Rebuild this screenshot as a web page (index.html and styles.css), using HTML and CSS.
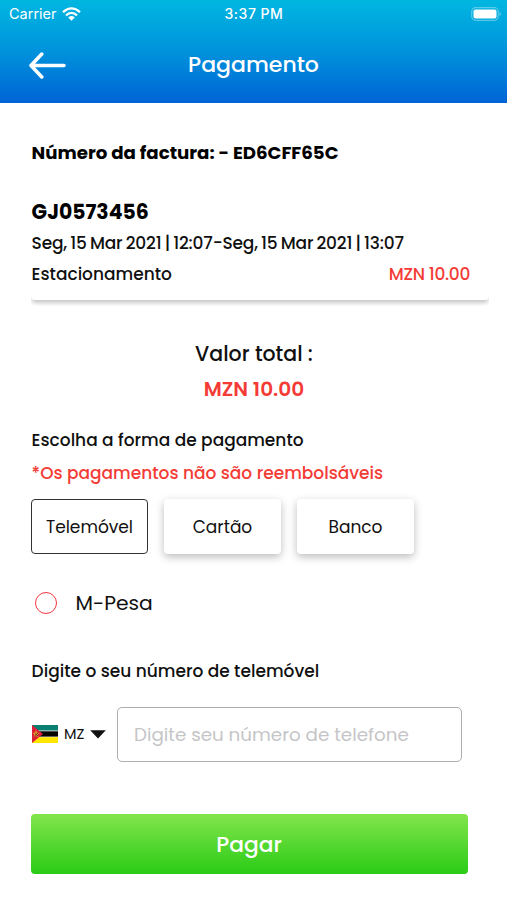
FILE: index.html
```html
<!DOCTYPE html>
<html lang="pt">
<head>
<meta charset="utf-8">
<title>Pagamento</title>
<link rel="stylesheet" href="styles.css">
</head>
<body>
<header class="header">
  <div class="status">
    <div class="carrier"><span>Carrier</span>
      <svg width="19" height="14" viewBox="0 0 19 14" fill="none" stroke="#fff" stroke-width="2.3"><path d="M1 5.2Q9.500-2.400 18 5.200"/><path d="M4 8.300Q9.500 3.500 15 8.300"/><path d="M6.200 10.400Q9.500 7.800 12.800 10.400L9.500 13.700Z" fill="#fff" stroke="none"/></svg>
    </div>
    <span class="clock">3:37 PM</span>
    <svg class="battery" width="31" height="14" viewBox="0 0 31 14"><rect x=".7" y=".7" width="26.600" height="12.600" rx="4" fill="none" stroke="#fff" stroke-opacity=".35" stroke-width="1.200"/><rect x="2.500" y="2.500" width="23" height="9" rx="2" fill="#fff"/><path d="M28.700 5Q31 7 28.700 9Z" fill="#fff" fill-opacity=".5"/></svg>
  </div>
  <div class="titlebar">
    <svg width="40" height="28" viewBox="0 0 40 28" fill="none" stroke="#fff" stroke-width="3.500" stroke-linecap="round" stroke-linejoin="round"><path d="M14.800 3L4 14.500L14.800 26M4.500 14.500H37"/></svg>
    <h1 class="title">Pagamento</h1>
  </div>
</header>
<main class="content">
  <p class="line invoice">Número da factura: - ED6CFF65C</p>
  <section class="ticket">
    <p class="line plate">GJ0573456</p>
    <p class="line period">Seg, 15 Mar 2021 | 12:07-Seg, 15 Mar 2021 | 13:07</p>
    <p class="line service"><span>Estacionamento</span><span class="red price">MZN 10.00</span></p>
  </section>
  <section class="total">
    <p class="line">Valor total :</p>
    <p class="line red amount">MZN 10.00</p>
  </section>
  <p class="line choose">Escolha a forma de pagamento</p>
  <p class="line red note">*Os pagamentos não são reembolsáveis</p>
  <div class="tabs">
    <button class="tab active">Telemóvel</button>
    <button class="tab">Cartão</button>
    <button class="tab">Banco</button>
  </div>
  <div class="option"><span class="radio"></span><span>M-Pesa</span></div>
  <p class="line phone-label">Digite o seu número de telemóvel</p>
  <div class="phone">
    <div class="country">
      <svg width="26" height="18" viewBox="0 0 26 18"><path fill="#087f70" d="M0 0h26v6H0z"/><path fill="#f4f4ef" d="M0 5.500h26v7H0z"/><path fill="#050505" d="M0 6.300h26v5.300H0z"/><path fill="#ffe600" d="M0 12.200h26V18H0z"/><path fill="#dc2039" d="M0 0l11 9L0 18z"/><path fill="#e8a32a" d="M4 5l1 2.700 2.700.1-2.100 1.700.8 2.700L4 10.700l-2.400 1.500.8-2.700L.5 7.800 3 7.700z"/><path d="M2.300 11.500l4-4M3 8.500l3 2.500" stroke="#5c2c22" stroke-width=".9"/></svg>
      <span class="code">MZ</span>
      <svg class="caret" width="16" height="9" viewBox="0 0 16 9"><path d="M.2.3h15.600L8 8.500z" fill="#111"/></svg>
    </div>
    <div class="field">Digite seu número de telefone</div>
  </div>
  <button class="pay">Pagar</button>
</main>
</body>
</html>
```

FILE: styles.css
```css
* { box-sizing: border-box; }
body {
  margin: 0;
  width: 507px;
  height: 900px;
  overflow: hidden;
  background: #fff;
  color: #101010;
  font-family: Poppins, Inter, sans-serif;
  font-size: 17px;
}
button { font: inherit; color: inherit; border: 0; padding: 0; }
span, p { white-space: nowrap; }
.header {
  height: 103px;
  color: #fff;
  background: linear-gradient(#00b7e0, #0094dc 48%, #0064d6);
}
.status {
  display: grid;
  grid-template-columns: 1fr auto 1fr;
  align-items: center;
  height: 27px;
  padding: 0 7px 0 9px;
  font: 14.5px/27px Inter, sans-serif;
}
.carrier { display: flex; align-items: center; gap: 5px; }
.clock { font-weight: 500; font-size: 14px; letter-spacing: .5px; margin-right: 1px; }
.battery { justify-self: end; margin-right: -2px; }
.titlebar {
  display: grid;
  grid-template-columns: 40px 1fr 40px;
  align-items: center;
  height: 75px;
  padding: 0 27px;
}
.title { margin: 0; text-align: center; font-size: 22px; font-weight: 500; }
.content { padding: 33px 32px 0 31px; }
.line { display: flex; align-items: center; height: 34px; margin: 0; padding-left: .6px; }
.red { color: #f43b36; }
.invoice { height: 33px; font-size: 18.2px; font-weight: 700; color: #000; }
.ticket {
  width: 458px;
  height: 109px;
  margin-top: 22px;
  padding: 4px 19px 0 0;
  border-radius: 4px;
  box-shadow: 0 4px 4px -1px #c8c8c8;
  clip-path: inset(0 0 -6px 0);
  font-weight: 500;
}
.plate { height: 34px; font-size: 20.4px; font-weight: 700; color: #000; }
.period { height: 27px; letter-spacing: -.18px; word-spacing: -1px; }
.service { justify-content: space-between; height: 36px; }
.price { letter-spacing: -.3px; }
.total { margin-top: 35px; font-size: 20.5px; font-weight: 500; }
.total .line { justify-content: center; height: 36px; padding-left: 2px; }
.total .amount { font-size: 20.1px; font-weight: 600; }
.choose { margin-top: 16px; font-weight: 500; }
.note { height: 32px; font-weight: 500; }
.tabs { display: flex; gap: 16px; margin-top: 10px; }
.tab {
  width: 117px;
  height: 55px;
  border-radius: 4px;
  background: #fff;
  box-shadow: 0 3px 8px #0004;
}
.tab.active { border: 1.5px solid #333; box-shadow: none; }
.option { display: flex; align-items: center; height: 40px; margin-top: 29px; font-size: 20.3px; }
.radio { width: 22px; height: 22px; margin: 0 19px 0 3.5px; border: 1.5px solid #f5363f; border-radius: 50%; }
.phone-label { margin-top: 31px; font-weight: 500; }
.phone { display: flex; margin-top: 19px; }
.country { display: flex; align-items: center; width: 86px; height: 54px; padding-left: 1px; }
.code { margin-left: 6px; width: 21px; font-size: 14.5px; }
.caret { margin-left: 5px; }
.field {
  display: flex;
  align-items: center;
  width: 345px;
  height: 55px;
  padding-left: 16px;
  border: 1.5px solid #adadad;
  border-radius: 5px;
  color: #c5c5c7;
  font-size: 18.3px;
}
.pay {
  display: block;
  width: 437px;
  height: 60px;
  margin-top: 52px;
  padding: 1px 1px 0 0;
  border-radius: 4px;
  background: linear-gradient(#83e54c, #2acb16);
  color: #fff;
  font-size: 21.8px;
  font-weight: 500;
}
```
